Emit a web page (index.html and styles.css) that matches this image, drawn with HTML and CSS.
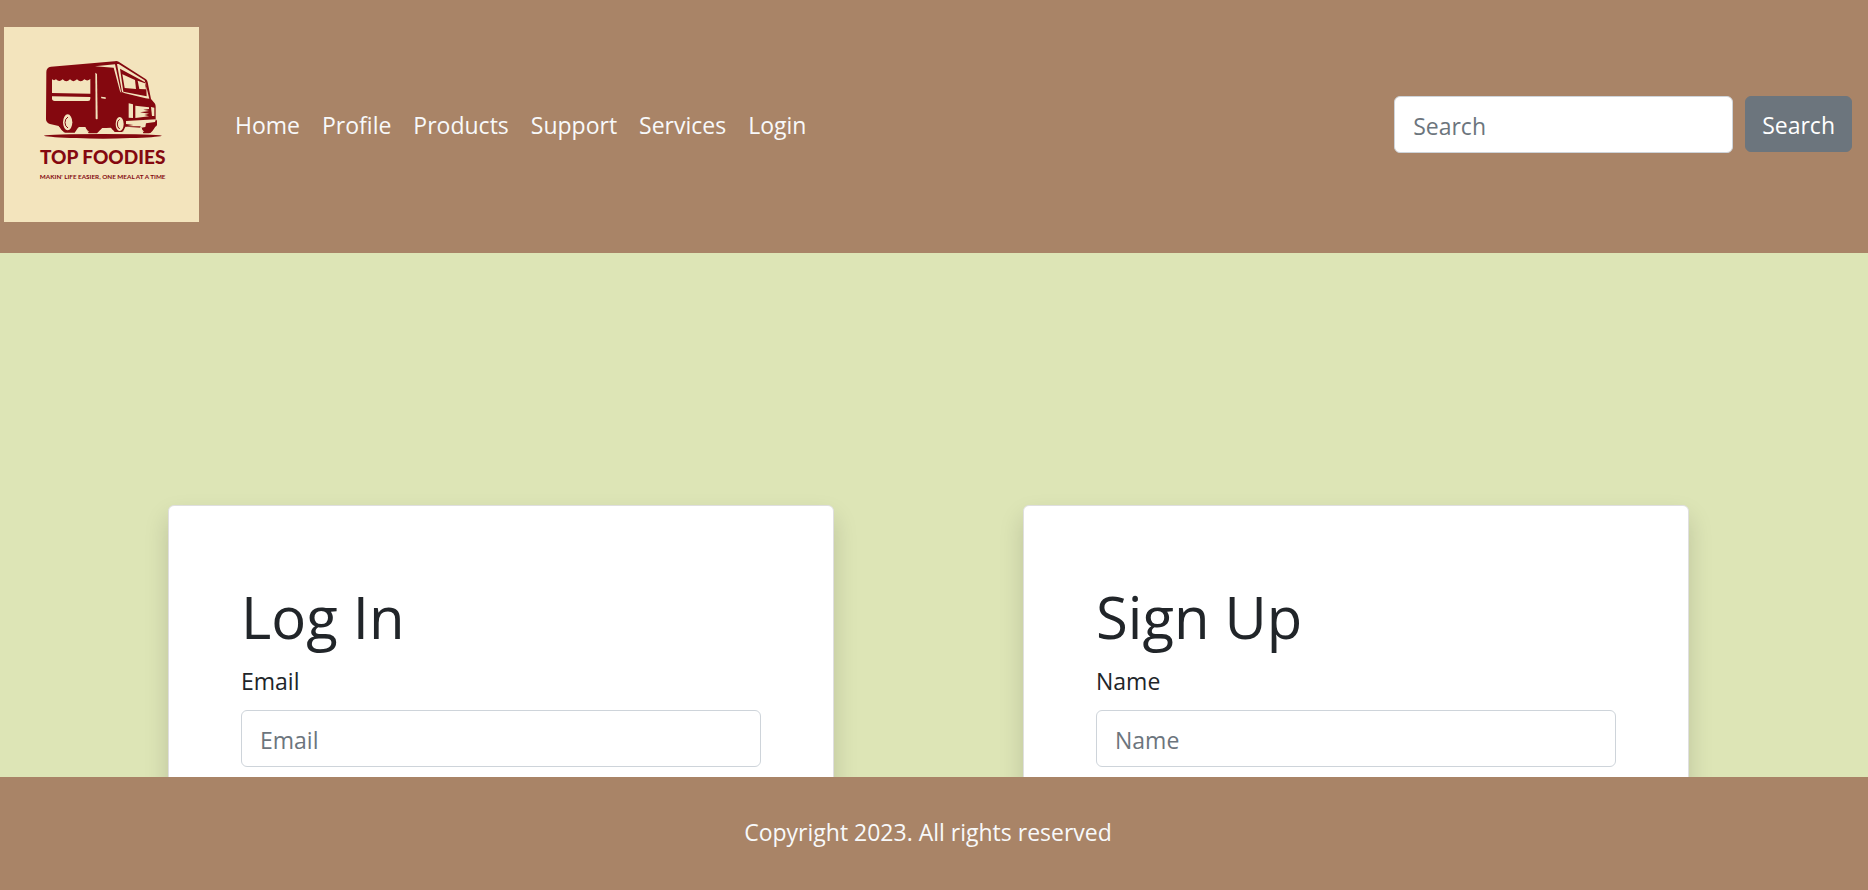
FILE: index.html
```
<!DOCTYPE html>
<html lang="en">
<head>
  <meta charset="utf-8">
  <meta name="viewport" content="width=device-width, initial-scale=1">
  <title>Top Foodies</title>
  <link rel="stylesheet" href="styles.css">
</head>
<body>
  <header class="navbar">
    <a class="brand" href="#" aria-label="Top Foodies">
      <svg class="logo" viewBox="0 0 585 585" role="img" aria-label="Top Foodies">
        <rect width="585" height="585" fill="#f3e4bd"/>
        <g transform="translate(-12 -21)">
          <g fill="#84080f">
            <path d="M139 156Q139 142 153 140L344 124Q350 122 356 125L438 178Q442 181 443 187L453 237L464 250Q467 254 467 260V297L471 302V315Q470 319 466 320L458 332Q452 340 446 340H430L424 323L376 320L370 336H344L332 323L306 325L291 340H266L256 323H234L224 338H196Q184 338 176 318L150 312Q138 308 138 298Z"/>
            <path d="M131 347Q150 342 308 342T486 347Q470 352 390 354Q308 359 230 354Q150 352 131 347Z"/>
          </g>
          <g fill="#f3e4bd">
            <path d="M156 178Q162 183 168 178Q178 188 188 178Q199 190 210 178Q220 189 231 178Q242 190 253 178Q262 185 271 177V221L156 219Z"/>
            <path d="M156 229L271 231V236Q271 243 264 243H164Q156 243 156 235Z"/>
            <path d="M286 158L291 162L293 296Q290 300 287 296Z"/>
            <path d="M303 230L317 232V237L304 235Z"/>
            <path d="M285 139L345 133L364 219L360 214L341 143Z"/>
            <path d="M351 132L356 132L434 181L448 236L437 235L375 220L366 216ZM360 146L370 215L440 229L438 188Z" fill-rule="evenodd"/>
            <path d="M367 163L405 180L408 207L374 204Z"/>
            <path d="M413 182L435 190L438 208L418 207Z"/>
            <path d="M386 250L399 253V294L386 293Z"/>
            <path d="M406 257L447 262V267L430 269L447 273L420 277L447 281L433 285L447 289L406 294Z"/>
            <path d="M453 261L463 263V288L456 288Z"/>
            <path d="M378 303L468 298L465 306L438 310L436 321L420 324L422 319L379 319L400 315L378 312Z"/>
            <path d="M171 322L179 322Q184 333 194 338H160Q171 334 171 322Z"/>
            <path d="M236 321H256Q258 330 268 335H227Q235 332 236 321Z"/>
            <path d="M307 324H333Q334 332 343 334H297Q306 332 307 324Z"/>
            <path d="M375 324H425Q426 332 433 335H366Q374 332 375 324Z"/>
            <ellipse cx="203" cy="307" rx="14" ry="24"/>
            <ellipse cx="359" cy="312" rx="12" ry="21"/>
          </g>
          <g fill="none" stroke="#84080f" stroke-width="3">
            <path d="M204 291Q195 296 195 308Q195 319 204 324"/>
            <path d="M359 298Q352 302 352 312Q352 322 359 327"/>
          </g>
          <g class="logo-text" fill="#84080f" text-anchor="middle">
            <text class="logo-name" x="308" y="433">TOP FOODIES</text>
            <text class="logo-tagline" x="308" y="476">MAKIN' LIFE EASIER, ONE MEAL AT A TIME</text>
          </g>
        </g>
      </svg>
    </a>
    <nav class="nav" aria-label="Main">
      <a class="nav-link" href="#">Home</a>
      <a class="nav-link" href="#">Profile</a>
      <a class="nav-link" href="#">Products</a>
      <a class="nav-link" href="#">Support</a>
      <a class="nav-link" href="#">Services</a>
      <a class="nav-link" href="#">Login</a>
    </nav>
    <form class="search">
      <input class="field search-field" type="search" placeholder="Search" aria-label="Search">
      <button class="search-button" type="submit">Search</button>
    </form>
  </header>

  <main class="cards">
    <section class="card">
      <h1 class="card-title">Log In</h1>
      <form>
        <label class="label" for="login-email">Email</label>
        <input class="field" id="login-email" type="email" placeholder="Email">
      </form>
    </section>
    <section class="card">
      <h1 class="card-title">Sign Up</h1>
      <form>
        <label class="label" for="signup-name">Name</label>
        <input class="field" id="signup-name" type="text" placeholder="Name">
      </form>
    </section>
  </main>

  <footer class="footer">Copyright 2023. All rights reserved</footer>
</body>
</html>
```
FILE: styles.css
```
* {
  box-sizing: border-box;
}

body {
  margin: 0;
  background: #dde5b6;
  color: #212529;
  font-family: "Open Sans", "Noto Sans", sans-serif;
  font-size: 23px;
  line-height: 36px;
}

.navbar {
  display: flex;
  align-items: center;
  padding: 27px 16px 31px 4px;
  background: #a98467;
}

.brand,
.logo {
  display: block;
}

.logo {
  width: 195px;
  height: 195px;
}

.logo-text {
  font-family: "Lato", sans-serif;
  font-weight: 900;
}

.logo-name {
  font-size: 57px;
}

.logo-tagline {
  font-size: 19px;
  font-weight: 700;
}

.nav {
  display: flex;
  flex: 1;
  gap: 22px;
  padding-left: 36px;
}

.nav-link {
  color: #f8f9fa;
  text-decoration: none;
}

.search {
  display: flex;
  align-items: flex-start;
  gap: 12px;
}

.field {
  display: block;
  width: 100%;
  height: 57px;
  padding: 10px 18px 8px;
  border: 1px solid #ced4da;
  border-radius: 6px;
  background: #fff;
  color: #495057;
  font: inherit;
  appearance: none;
}

.field::placeholder {
  color: #6c757d;
  opacity: 1;
}

.search-field {
  width: 339px;
}

.search-button {
  height: 56px;
  padding: 10px 16px 8px;
  border: 1px solid #6c757d;
  border-radius: 6px;
  background: #6c757d;
  color: #fff;
  font: inherit;
}

.cards {
  display: grid;
  grid-template-columns: 1fr 1fr;
  gap: 189px;
  padding: 252px 179px 0 168px;
}

.card {
  padding: 72px;
  border: 1px solid #dfdfdf;
  border-radius: 6px;
  background: #fff;
  box-shadow: 0 12px 24px rgba(0, 0, 0, 0.15);
}

.card-title {
  margin: 0 0 7px;
  font-size: 58px;
  font-weight: 400;
  line-height: 78px;
}

.label {
  display: block;
  margin-bottom: 11px;
}

.footer {
  position: fixed;
  right: 0;
  bottom: 0;
  left: 0;
  padding: 37px 12px 40px 0;
  background: #a98467;
  color: #f8f9fa;
  text-align: center;
}
```
